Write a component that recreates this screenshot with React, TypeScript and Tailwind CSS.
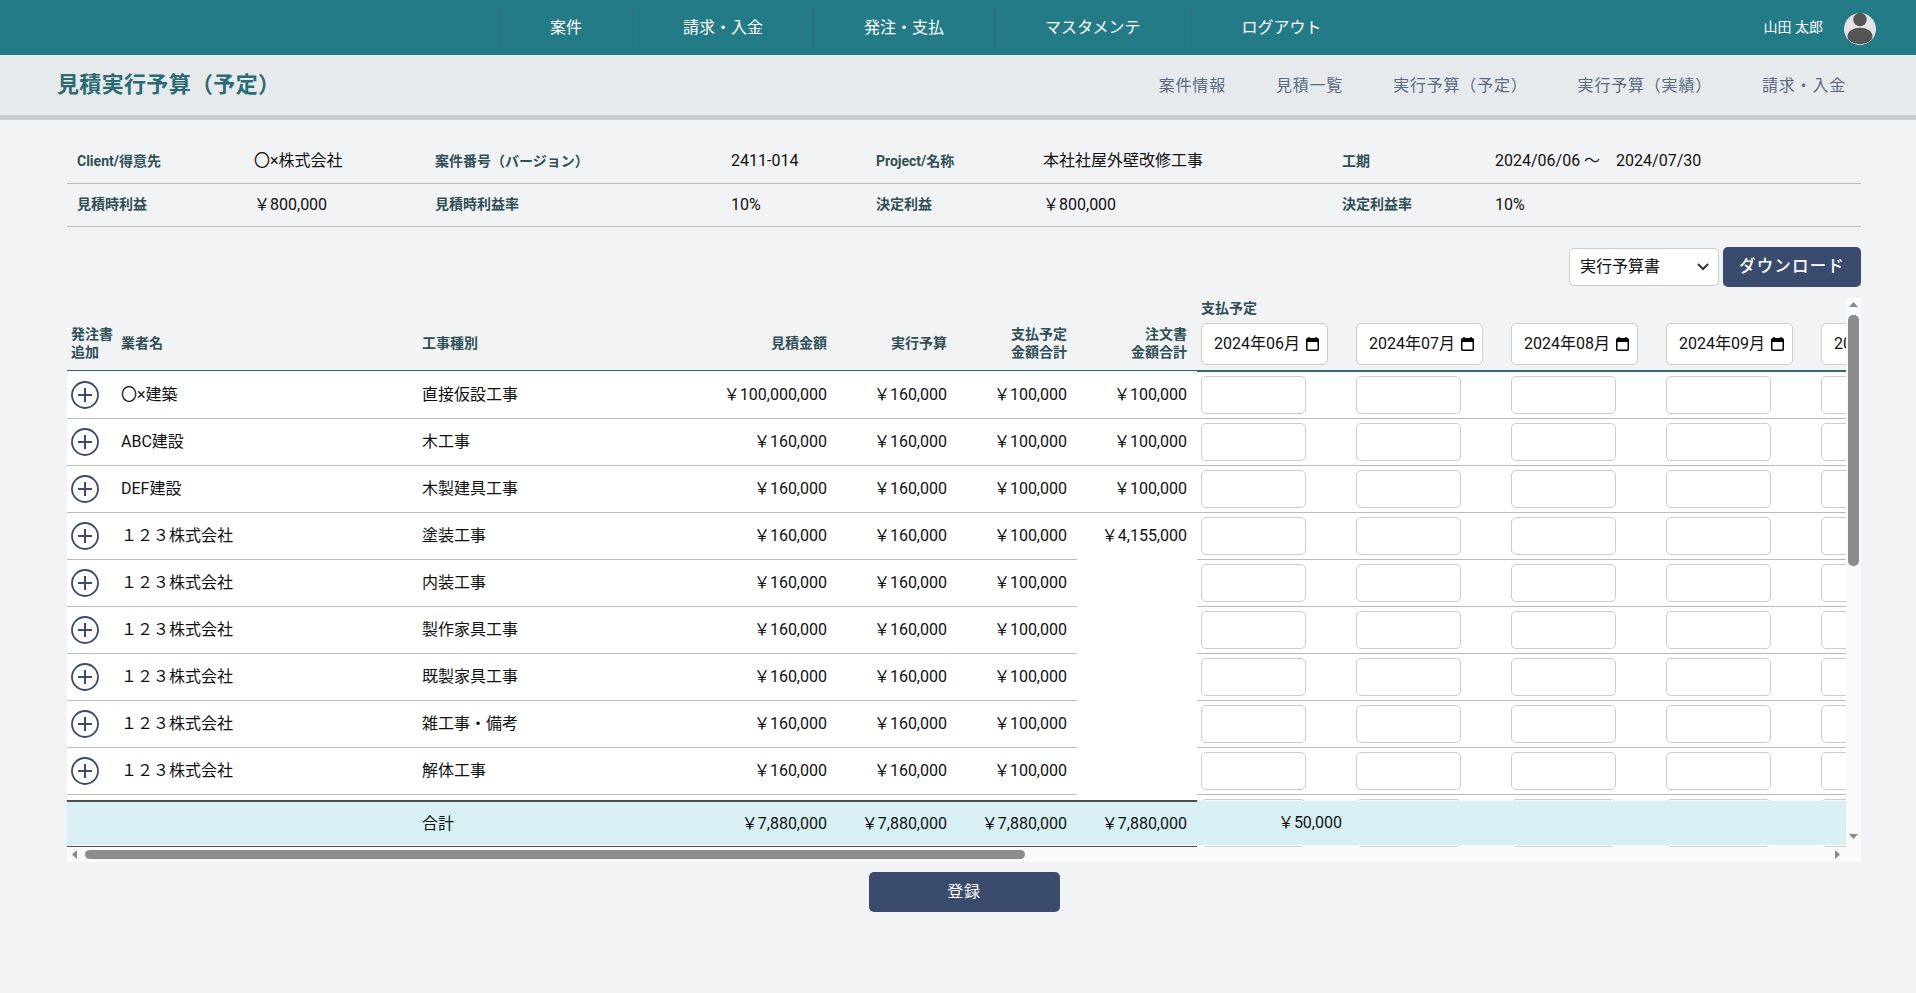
import React from "react";

const font = "font-[Roboto,'Noto_Sans_CJK_JP',sans-serif]";

const navItems = ["案件", "請求・入金", "発注・支払", "マスタメンテ", "ログアウト"];
const subNav = ["案件情報", "見積一覧", "実行予算（予定）", "実行予算（実績）", "請求・入金"];
const months = ["2024年06月", "2024年07月", "2024年08月", "2024年09月", "2024年10月", "2024年11月"];

const infoRows = [
  ["Client/得意先", "〇×株式会社", "案件番号（バージョン）", "2411-014", "Project/名称", "本社社屋外壁改修工事", "工期", "2024/06/06 ～　2024/07/30"],
  ["見積時利益", "￥800,000", "見積時利益率", "10%", "決定利益", "￥800,000", "決定利益率", "10%"],
];

const rows = [
  ["〇×建築", "直接仮設工事", "￥100,000,000", "￥160,000", "￥100,000", "￥100,000"],
  ["ABC建設", "木工事", "￥160,000", "￥160,000", "￥100,000", "￥100,000"],
  ["DEF建設", "木製建具工事", "￥160,000", "￥160,000", "￥100,000", "￥100,000"],
  ["１２３株式会社", "塗装工事", "￥160,000", "￥160,000", "￥100,000", "￥4,155,000"],
  ["１２３株式会社", "内装工事", "￥160,000", "￥160,000", "￥100,000", ""],
  ["１２３株式会社", "製作家具工事", "￥160,000", "￥160,000", "￥100,000", ""],
  ["１２３株式会社", "既製家具工事", "￥160,000", "￥160,000", "￥100,000", ""],
  ["１２３株式会社", "雑工事・備考", "￥160,000", "￥160,000", "￥100,000", ""],
  ["１２３株式会社", "解体工事", "￥160,000", "￥160,000", "￥100,000", ""],
  ["", "", "", "", "", ""],
  ["", "", "", "", "", ""],
];

function PlusCircle() {
  return (
    <svg width="28" height="28" viewBox="0 0 28 28" fill="none" stroke="#3a4b6e" strokeWidth="1.8">
      <circle cx="14" cy="14" r="13" />
      <path d="M14 7v14M7 14h14" strokeWidth="2" />
    </svg>
  );
}

function CalendarIcon() {
  return (
    <svg width="13" height="14" viewBox="0 0 13 14" className="shrink-0">
      <rect x="0.75" y="1.75" width="11.5" height="11.5" rx="1" fill="none" stroke="#000" strokeWidth="1.5" />
      <path d="M1 1.5h11v3.5H1z" fill="#000" />
      <path d="M3 0v2M10 0v2" stroke="#000" strokeWidth="1.5" />
    </svg>
  );
}

function Avatar() {
  return (
    <svg width="32" height="32" viewBox="0 0 32 32" className="mt-[3px]">
      <clipPath id="av">
        <circle cx="16" cy="16" r="16" />
      </clipPath>
      <circle cx="16" cy="16" r="16" fill="#e4e4e6" />
      <g clipPath="url(#av)" fill="#555">
        <circle cx="16" cy="6.5" r="6.8" />
        <ellipse cx="16" cy="23" rx="12.5" ry="8.3" />
      </g>
    </svg>
  );
}

export default function App() {
  return (
    <div className={`${font} min-h-[993px] bg-[#f2f3f5] text-[16px] text-[#111] overflow-hidden`}>
      <header className="h-[55px] bg-[#247b88] flex items-center justify-between pl-[499px] pr-[40px] text-white">
        <nav className="flex h-[39px]">
          {navItems.map((n) => (
            <a key={n} className="px-[50px] flex items-center border-l border-dotted border-[#4a6068] leading-none">
              {n}
            </a>
          ))}
        </nav>
        <div className="flex items-center gap-[21px]">
          <span className="text-[14px]">山田 太郎</span>
          <Avatar />
        </div>
      </header>

      <div className="h-[65px] bg-[#e7eaed] border-b-[5px] border-[#c5cdd2] flex items-center justify-between pl-[57px] pr-[70px]">
        <h1 className="text-[22px] font-bold text-[#2b6b73] tracking-[0.015em] -mt-[1px]">見積実行予算（予定）</h1>
        <nav className="flex gap-[50px] text-[#5a6a80] tracking-[0.05em] mt-[1px]">
          {subNav.map((s) => (
            <a key={s}>{s}</a>
          ))}
        </nav>
      </div>

      <main className="pl-[67px] pr-[55px] pt-[20px]">
        <div className="w-[1794px]">
          {infoRows.map((r, i) => (
            <div
              key={i}
              className="grid grid-cols-[177px_181px_296px_145px_167px_299px_153px_376px] h-[43.5px] items-center border-b border-[#bbbdc0]"
            >
              {r.map((c, j) => (
                <div key={j} className={j % 2 === 0 ? "pl-[10px] text-[14px] font-bold text-[#2f4f55]" : "pl-[10px] whitespace-pre"}>
                  {c}
                </div>
              ))}
            </div>
          ))}
        </div>

        <div className="w-[1794px] flex justify-end items-center gap-[4px] mt-[20px] h-[40px]">
          <div className="relative w-[150px] h-[38px]">
            <select className="appearance-none w-full h-full bg-white border border-[#ccc] rounded-[5px] pl-[10px] text-[16px] text-[#111]">
              <option>実行予算書</option>
            </select>
            <svg className="absolute right-[9px] top-[14px]" width="14" height="10" viewBox="0 0 14 10" fill="none" stroke="#333" strokeWidth="2">
              <path d="M2 2l5 5 5-5" />
            </svg>
          </div>
          <button className="w-[138px] h-[40px] bg-[#3a4b6e] text-white rounded-[5px] font-medium tracking-[0.07em] text-[16.5px]">ダウンロード</button>
        </div>

        <div className="w-[1794px] mt-[10px] bg-[#fafafa] grid grid-cols-[1779px_15px] grid-rows-[550px_15px]">
          <div className="overflow-hidden">
            <table className="table-fixed border-separate border-spacing-0 w-[2060px]">
              <colgroup>
                <col className="w-[50px]" />
                <col className="w-[300px]" />
                <col className="w-[300px]" />
                <col className="w-[120px]" />
                <col className="w-[120px]" />
                <col className="w-[120px]" />
                <col className="w-[120px]" />
                {months.map((m) => (
                  <col key={m} className="w-[155px]" />
                ))}
              </colgroup>
              <thead>
                <tr className="bg-[#f2f3f5] text-[14px] font-bold text-[#2f4f55] leading-[18px]">
                  {[
                    ["発注書", "追加"],
                    ["業者名"],
                    ["工事種別"],
                    ["見積金額"],
                    ["実行予算"],
                    ["支払予定", "金額合計"],
                    ["注文書", "金額合計"],
                  ].map((h, i) => (
                    <th
                      key={i}
                      className={`h-[74px] align-bottom pb-[9px] font-bold border-b border-[#2f6a70] ${
                        i === 0 ? "text-left pl-[4px]" : i === 1 ? "text-left pl-[4px]" : i === 2 ? "text-left pl-[5px]" : "text-right pr-[10px]"
                      }`}
                    >
                      <div className="h-[36px] flex flex-col justify-center">
                        {h.map((l) => (
                          <div key={l}>{l}</div>
                        ))}
                      </div>
                    </th>
                  ))}
                  {months.map((m, i) => (
                    <th key={m} className="h-[74px] align-bottom pb-[5px] pl-[4px] text-left font-bold border-b border-[#2f6a70]">
                      {i === 0 && <div className="h-[18px] mb-[6px]">支払予定</div>}
                      <div className="w-[127px] h-[42px] bg-white border border-[#ccc] rounded-[5px] flex items-center justify-between pl-[12px] pr-[8px] text-[16px] font-normal text-[#111] whitespace-nowrap overflow-hidden">
                        <span>{m}</span>
                        <CalendarIcon />
                      </div>
                    </th>
                  ))}
                </tr>
              </thead>
              <tbody>
                {rows.map((r, i) => (
                  <tr key={i} className="bg-white">
                    <td className={`${i === 0 ? "h-[48px]" : "h-[47px]"} pl-[4px] border-b border-[#bbb]`}>
                      <div className="flex items-center">
                        <PlusCircle />
                      </div>
                    </td>
                    <td className="pl-[4px] border-b border-[#bbb]">{r[0]}</td>
                    <td className="pl-[5px] border-b border-[#bbb]">{r[1]}</td>
                    <td className="pr-[10px] text-right border-b border-[#bbb]">{r[2]}</td>
                    <td className="pr-[10px] text-right border-b border-[#bbb]">{r[3]}</td>
                    <td className="pr-[10px] text-right border-b border-[#bbb]">{r[4]}</td>
                    {i < 3 && <td className="pr-[10px] text-right border-b border-[#bbb]">{r[5]}</td>}
                    {i === 3 && (
                      <td rowSpan={rows.length - 3} className="pr-[10px] text-right align-top bg-white">
                        <div className="h-[46px] flex items-center justify-end">{r[5]}</div>
                      </td>
                    )}
                    {months.map((m) => (
                      <td key={m} className={`pl-[4px] border-b border-[#bbb] ${i === 0 ? "border-t border-t-[#2f6a70]" : ""}`}>
                        <input className="block w-[105px] h-[38px] bg-white border border-[#ccc] rounded-[5px]" />
                      </td>
                    ))}
                  </tr>
                ))}
              </tbody>
              <tfoot>
                <tr>
                  <td className="sticky bottom-0 h-[47px] bg-[#d8f0f4] border-t-2 border-b border-[#4a4f52] shadow-[inset_0_-1px_0_#fff]" />
                  <td className="sticky bottom-0 bg-[#d8f0f4] border-t-2 border-b border-[#4a4f52] shadow-[inset_0_-1px_0_#fff]" />
                  <td className="sticky bottom-0 pl-[5px] bg-[#d8f0f4] border-t-2 border-b border-[#4a4f52] shadow-[inset_0_-1px_0_#fff]">合計</td>
                  {[0, 1, 2, 3].map((k) => (
                    <td key={k} className="sticky bottom-0 pr-[10px] text-right bg-[#d8f0f4] border-t-2 border-b border-[#4a4f52] shadow-[inset_0_-1px_0_#fff]">
                      ￥7,880,000
                    </td>
                  ))}
                  {months.map((m, i) => (
                    <td key={m} className="sticky bottom-0 pr-[10px] text-right bg-[#d8f0f4] bg-clip-padding border-t border-b-2 border-transparent">
                      {i === 0 ? "￥50,000" : ""}
                    </td>
                  ))}
                </tr>
              </tfoot>
            </table>
          </div>

          <div className="flex flex-col items-center">
            <svg width="9" height="5" viewBox="0 0 9 5" className="mt-[5px] shrink-0" fill="#8a8a8a">
              <path d="M4.5 0L9 5H0z" />
            </svg>
            <div className="w-[11px] h-[251px] rounded-[5px] bg-[#8c8c8c] mt-[8px]" />
            <div className="flex-1" />
            <svg width="9" height="5" viewBox="0 0 9 5" className="mb-[8px] shrink-0" fill="#8a8a8a">
              <path d="M4.5 5L9 0H0z" />
            </svg>
          </div>

          <div className="flex items-center pl-[5px] pr-[6px]">
            <svg width="5" height="9" viewBox="0 0 5 9" fill="#8a8a8a" className="shrink-0">
              <path d="M0 4.5L5 0v9z" />
            </svg>
            <div className="ml-[8px] w-[940px] h-[9px] rounded-[5px] bg-[#8c8c8c]" />
            <div className="flex-1" />
            <svg width="5" height="9" viewBox="0 0 5 9" fill="#8a8a8a" className="shrink-0">
              <path d="M5 4.5L0 0v9z" />
            </svg>
          </div>
          <div />
        </div>

        <div className="w-[1794px] flex justify-center mt-[10px]">
          <button className="w-[191px] h-[40px] bg-[#3a4b6e] text-white rounded-[5px] tracking-[0.05em]">登録</button>
        </div>
      </main>
    </div>
  );
}
